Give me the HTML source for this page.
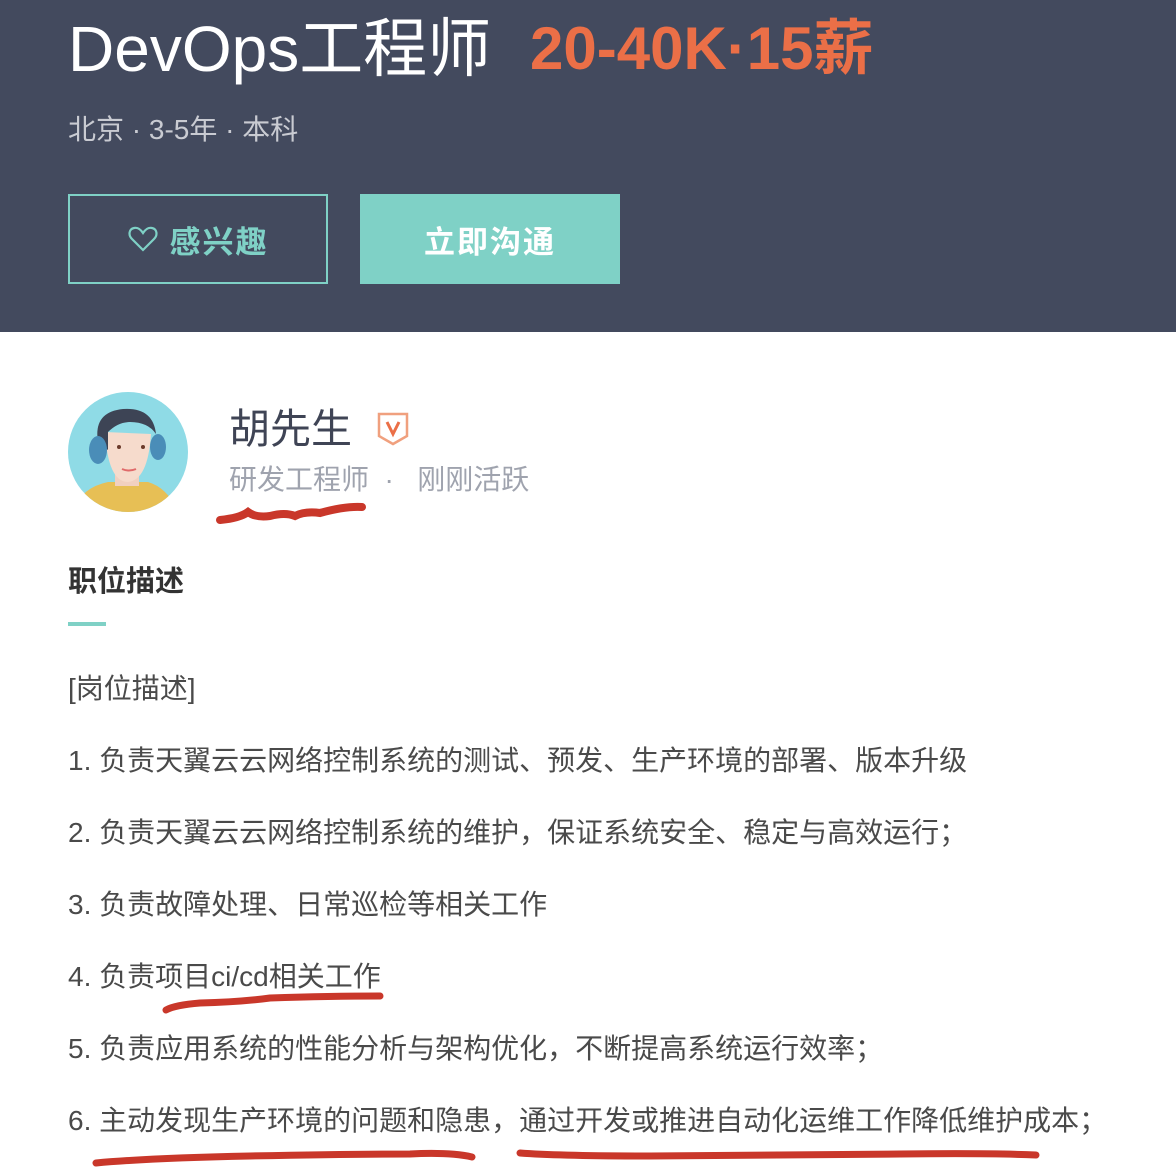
<!DOCTYPE html>
<html><head><meta charset="utf-8"><style>
*{margin:0;padding:0;box-sizing:border-box}
body{width:1176px;height:1176px;overflow:hidden;background:#fff;font-family:"Liberation Sans","Noto Sans CJK SC",sans-serif;position:relative}
.hd{position:absolute;left:0;top:0;width:1176px;height:332px;background:#434a5e}
.t{position:absolute;left:68px;top:9px;color:#fff;font-size:64px;white-space:nowrap;line-height:80px}
.sal{position:absolute;left:530px;top:14px;color:#eb6f47;font-size:60px;font-weight:bold;white-space:nowrap;line-height:70px}
.sub{position:absolute;left:68px;top:112px;color:#c9cbd2;font-size:28px;line-height:36px;white-space:nowrap}
.b1{position:absolute;left:68px;top:194px;width:260px;height:90px;border:2px solid #7fd1c6;color:#7fd1c6;font-size:31px;font-weight:bold;display:flex;align-items:center;justify-content:center;letter-spacing:2px}
.b2{position:absolute;left:360px;top:194px;width:260px;height:90px;background:#7fd1c6;color:#fff;font-size:31px;font-weight:bold;display:flex;align-items:center;justify-content:center;letter-spacing:2px}
.name{position:absolute;left:229px;top:402px;font-size:41px;color:#3f4455;line-height:54px}
.role{position:absolute;left:229px;top:462px;font-size:28px;color:#9fa3ae;line-height:36px;white-space:nowrap}
.sec{position:absolute;left:68px;top:564px;font-size:29px;font-weight:bold;color:#333;line-height:36px}
.bar{position:absolute;left:68px;top:622px;width:38px;height:4px;background:#7fd1c6}
.l{position:absolute;left:68px;font-size:28px;color:#4a4a4a;line-height:36px;white-space:nowrap}
</style></head><body>
<div class="hd">
<div class="t">DevOps工程师</div>
<div class="sal">20-40K·15薪</div>
<div class="sub">北京 · 3-5年 · 本科</div>
<div class="b1"><svg width="30" height="28" viewBox="0 0 30 28" style="margin-right:12px"><path d="M15 25 L4 14 C0 10 1 4 6 3 C10 2 13 5 15 8 C17 5 20 2 24 3 C29 4 30 10 26 14 Z" fill="none" stroke="#7fd1c6" stroke-width="2.2"/></svg>感兴趣</div>
<div class="b2">立即沟通</div>
</div>
<svg style="position:absolute;left:68px;top:392px" width="120" height="120" viewBox="0 0 120 120">
<defs><clipPath id="c"><circle cx="60" cy="60" r="60"/></clipPath></defs>
<circle cx="60" cy="60" r="60" fill="#8fdbe6"/>
<g clip-path="url(#c)">
<path d="M5 120 Q12 96 40 90 L80 90 Q100 96 110 120Z" fill="#e7bf55"/>
<rect x="47" y="76" width="24" height="18" fill="#f1d0c0"/>
<path d="M37 40 Q40 90 60 90 Q80 88 83 42 Z" fill="#f6dbcc"/>
<path d="M30 50 Q25 20 55 17 Q85 15 88 42 Q80 30 62 30 Q50 30 40 40 L40 58 Z" fill="#3d4455"/>
<ellipse cx="30" cy="58" rx="9" ry="14" fill="#4a8db8"/>
<ellipse cx="90" cy="55" rx="8" ry="13" fill="#4a8db8"/>
<circle cx="51" cy="55" r="2" fill="#6b3a2a"/><circle cx="75" cy="55" r="2" fill="#6b3a2a"/>
<path d="M54 77 Q61 80 68 77" stroke="#e06a6a" stroke-width="2" fill="none"/>
</g></svg>
<div class="name">胡先生</div>
<svg style="position:absolute;left:376px;top:411px" width="34" height="36" viewBox="0 0 34 36"><path d="M3 3 H31 V25 L17 33 L3 25 Z" fill="none" stroke="#f0a07e" stroke-width="2.5"/><path d="M11 11 L17 23 L23 11" fill="none" stroke="#eb6f47" stroke-width="3"/></svg>
<div class="role">研发工程师 &nbsp;· &nbsp;&nbsp;刚刚活跃</div>
<div class="sec">职位描述</div>
<div class="bar"></div>
<div class="l" style="top:671px">[岗位描述]</div>
<div class="l" style="top:743px">1. 负责天翼云云网络控制系统的测试、预发、生产环境的部署、版本升级</div>
<div class="l" style="top:815px">2. 负责天翼云云网络控制系统的维护，保证系统安全、稳定与高效运行；</div>
<div class="l" style="top:887px">3. 负责故障处理、日常巡检等相关工作</div>
<div class="l" style="top:959px">4. 负责项目ci/cd相关工作</div>
<div class="l" style="top:1031px">5. 负责应用系统的性能分析与架构优化，不断提高系统运行效率；</div>
<div class="l" style="top:1103px">6. 主动发现生产环境的问题和隐患，通过开发或推进自动化运维工作降低维护成本；</div>
<svg style="position:absolute;left:0;top:0" width="1176" height="1176" fill="none" stroke="#c9372a" stroke-linecap="round">
<path d="M220 520 Q240 518 248 512 Q256 518 270 516 Q285 512 295 516 Q305 511 320 513 Q345 506 362 507" stroke-width="8"/>
<path d="M166 1010 Q175 1005 200 1003 Q240 1002 270 998 Q330 996 380 996" stroke-width="7"/>
<path d="M96 1163 Q150 1158 250 1156 Q350 1154 410 1154 Q450 1152 472 1157" stroke-width="7"/>
<path d="M520 1153 Q560 1156 650 1156 Q800 1155 900 1154 Q990 1153 1036 1155" stroke-width="7"/>
</svg>
</body></html>
